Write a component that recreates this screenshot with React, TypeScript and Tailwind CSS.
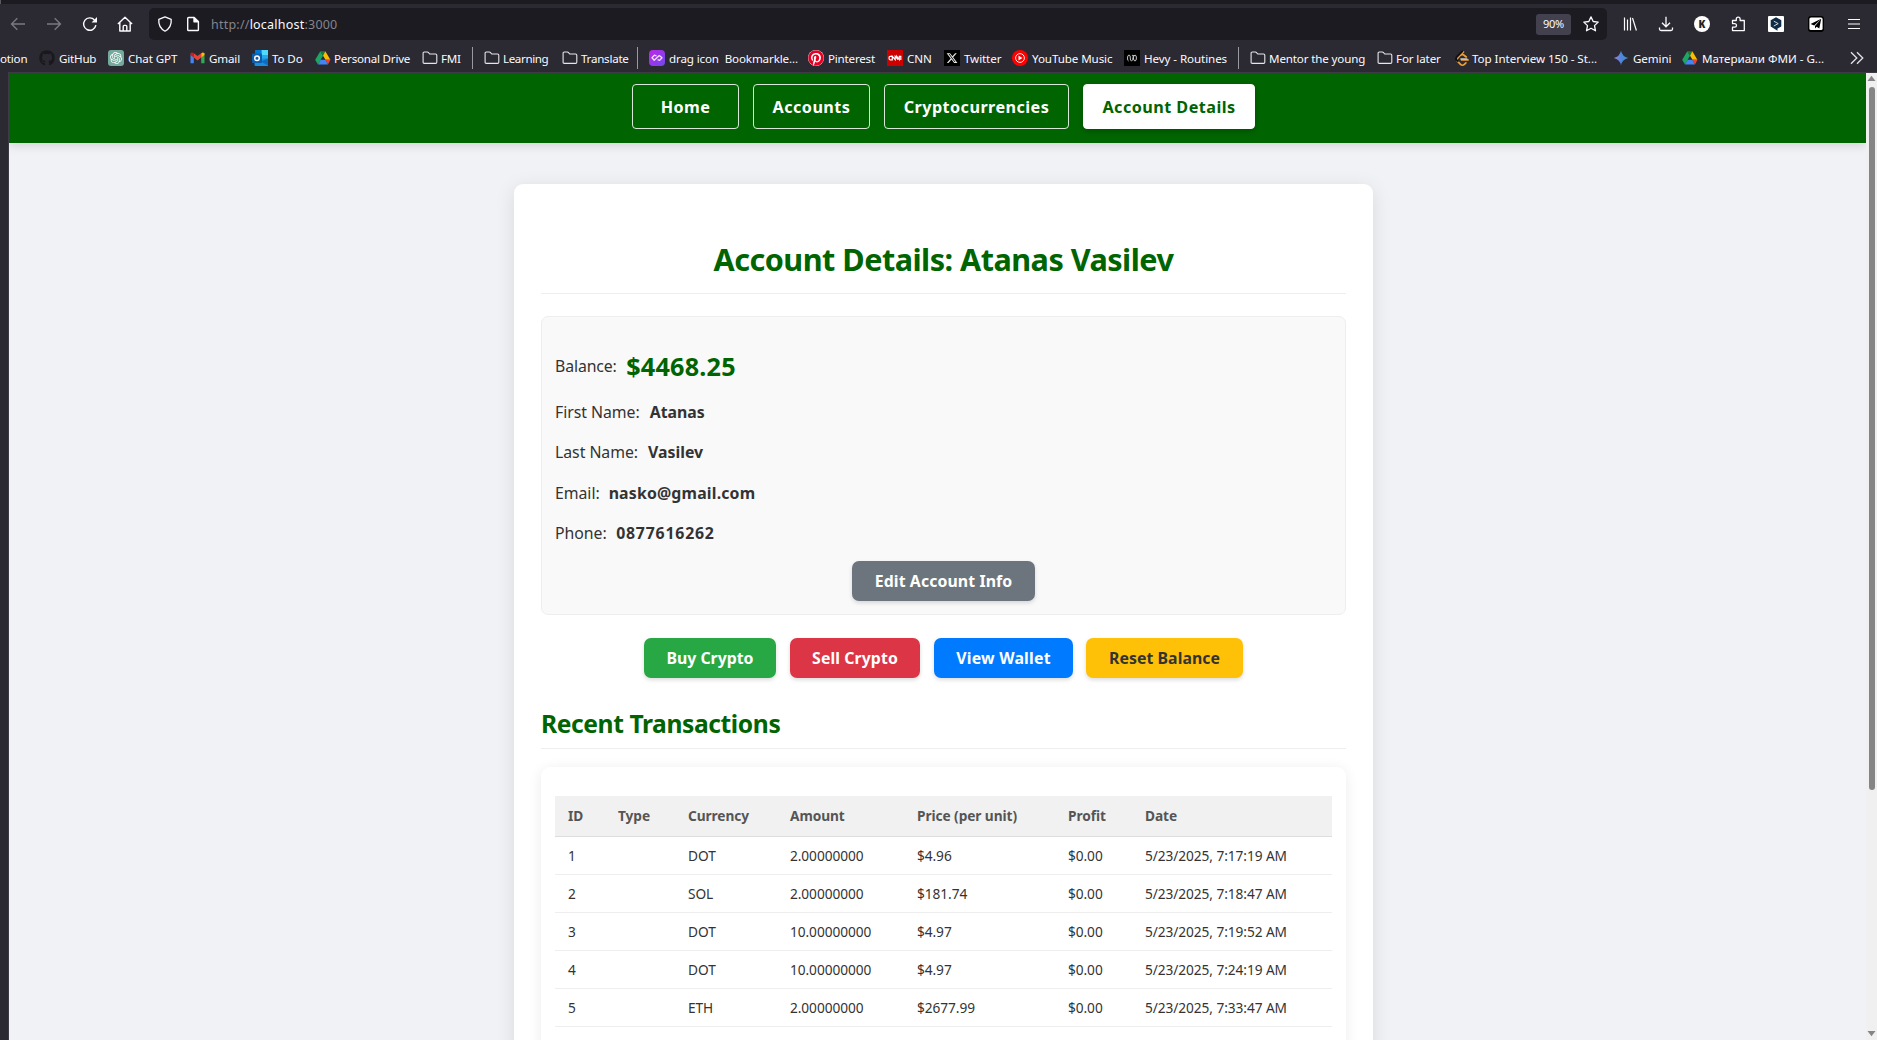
import React from 'react';
import { FaGithub, FaPinterest, FaXTwitter } from 'react-icons/fa6';
import { SiOpenai, SiLeetcode } from 'react-icons/si';

const FolderIcon = () => (
  <svg width="16" height="16" viewBox="0 0 16 16" fill="none" stroke="#e6e6ea" strokeWidth="1.1" strokeLinejoin="round">
    <path d="M1.1 12.2V3.2Q1.1 2 2.3 2H5.3Q6 2 6.5 2.6L7.7 4H13.6Q14.8 4 14.8 5.2V12.2Q14.8 13.4 13.6 13.4H2.3Q1.1 13.4 1.1 12.2Z" />
  </svg>
);

const DriveIcon = () => (
  <svg width="16" height="16" viewBox="0 0 16 16">
    <path d="M5.3 1.2 8 5.8 3 14.5 0.5 10.2Q.3 9.7.5 9.2Z" fill="#1fa463" />
    <path d="M5.3 1.2H10.3L8 5.8Z" fill="#188038" />
    <path d="M10.3 1.2 15.4 9.7H10.5L8 5.8Z" fill="#fbbc04" />
    <path d="M5.6 9.7H10.5L13 14.5H3Z" fill="#4285f4" />
    <path d="M10.5 9.7H15.5L13 14.5Z" fill="#ea4335" />
  </svg>
);

const GithubIcon = () => <FaGithub size={16} color="#19191d" />;

const ChatIcon = () => (
  <span className="flex h-4 w-4 items-center justify-center rounded-[3px] bg-[#74aa9c]">
    <SiOpenai size={12} color="#fff" />
  </span>
);

const GmailIcon = () => (
  <svg width="15" height="16" viewBox="0 0 15 16">
    <path d="M.5 4.5V13.2H3.8V7Z" fill="#4285f4" />
    <path d="M14.5 4.5V13.2H11.2V7Z" fill="#34a853" />
    <path d="M.5 3.6Q1.7 1.6 3.8 3.2V7.6L.5 5Z" fill="#c5221f" />
    <path d="M14.5 3.6Q13.3 1.6 11.2 3.2V7.6L14.5 5Z" fill="#fbbc04" />
    <path d="M3.8 3.2 7.5 6 11.2 3.2V7.6L7.5 10.4 3.8 7.6Z" fill="#ea4335" />
  </svg>
);

const OutlookIcon = () => (
  <svg width="16" height="16" viewBox="0 0 16 16">
    <path d="M3.5 0H16V9H3.5Z" fill="#28a8ea" />
    <path d="M9.5 0H16V5H9.5Z" fill="#50d9ff" />
    <path d="M3.5 0H9.5V5H3.5Z" fill="#0078d4" />
    <path d="M2.5 8.5H16V16H3.5Q2.5 16 2.5 15Z" fill="#1490df" />
    <path d="M16 8.5V15.5L9 11.5Z" fill="#0f6cbd" />
    <rect x="0" y="3.5" width="10" height="9.5" rx="1" fill="#0f5cad" />
    <circle cx="5" cy="8.2" r="2.3" fill="none" stroke="#fff" strokeWidth="1.5" />
  </svg>
);

const DragIcon = () => (
  <svg width="16" height="16" viewBox="0 0 16 16">
    <defs>
      <linearGradient id="drag" x1="0" y1="0" x2="1" y2="1">
        <stop offset="0" stopColor="#c026e8" />
        <stop offset="1" stopColor="#6d4aee" />
      </linearGradient>
    </defs>
    <rect width="16" height="16" rx="4" fill="url(#drag)" />
    <path d="M7.6 6 5.4 5.2 3 7.8 5.2 10.2 10.3 5.6 13 7.8 10.6 10.4 8.6 9.6" fill="none" stroke="#f5dcff" strokeWidth="1.3" strokeLinejoin="round" />
  </svg>
);

const PinterestIcon = () => (
  <span className="flex h-4 w-4 items-center justify-center rounded-full bg-white">
    <FaPinterest size={16} color="#e60023" />
  </span>
);

const CnnIcon = () => (
  <svg width="16" height="16" viewBox="0 0 16 16">
    <rect width="16" height="16" fill="#cc0000" />
    <path d="M5 6.3H3.2Q2 6.3 2 8T3.2 9.8H5.3V6.4L8.2 9.7V6.4L11 9.7M9.7 6.4V6.3L12.3 9.6V6.3H13.8V10" fill="none" stroke="#fff" strokeWidth="1.2" />
  </svg>
);

const XIcon = () => (
  <span className="flex h-4 w-4 items-center justify-center bg-black">
    <FaXTwitter size={12} color="#e8e8e8" />
  </span>
);

const YtMusicIcon = () => (
  <svg width="16" height="16" viewBox="0 0 16 16">
    <circle cx="8" cy="8" r="8" fill="#f00" />
    <circle cx="8" cy="8" r="4.4" fill="none" stroke="#fff" strokeWidth=".9" />
    <path d="M6.5 5.6V10.4L10.4 8Z" fill="#fff" />
  </svg>
);

const HevyIcon = () => (
  <svg width="16" height="16" viewBox="0 0 16 16">
    <rect width="16" height="16" fill="#000" />
    <path d="M4.6 11Q3.5 11 3.5 8T5 5 6.3 8 7.6 11 9.4 5M7.9 5.6Q9 4.4 9.4 6.4M9.4 8Q9.6 11 11 11T12.4 8 11 5 9 9.6" fill="none" stroke="#c4c4c4" strokeWidth="1" />
  </svg>
);

const LeetIcon = () => (
  <span className="relative flex h-4 w-4 items-center justify-center">
    <SiLeetcode size={15} color="#f0a030" />
    <svg className="absolute inset-0" width="16" height="16" viewBox="0 0 16 16" fill="none">
      <path d="M8.8.8 2.6 7Q1.4 8.4 2.6 9.8L4.4 11.6" stroke="#111114" strokeWidth="1.9" />
      <path d="M6.4 9H13.4" stroke="#c9c9cc" strokeWidth="1.5" />
    </svg>
  </span>
);

const GeminiIcon = () => (
  <svg width="16" height="16" viewBox="0 0 16 16">
    <defs>
      <linearGradient id="gem" x1="0" y1="0" x2="1" y2="0">
        <stop offset="0.1" stopColor="#9a7fd0" />
        <stop offset=".5" stopColor="#4f86e0" />
        <stop offset="1" stopColor="#3f8ec0" />
      </linearGradient>
    </defs>
    <path d="M8 .8Q9.3 6.7 15.2 8 9.3 9.3 8 15.2 6.7 9.3.8 8 6.7 6.7 8 .8Z" fill="url(#gem)" />
  </svg>
);

const bookmarks: { label: string; icon?: React.FC; cell: string; gap?: string; sep?: boolean }[] = [
  { label: 'otion', cell: 'w-[39px] tracking-[-0.2px]' },
  { label: 'GitHub', icon: GithubIcon, cell: 'w-[69px] tracking-[-0.2px]', gap: 'ml-1' },
  { label: 'Chat GPT', icon: ChatIcon, cell: 'w-[81px] tracking-[-0.1px]', gap: 'ml-1' },
  { label: 'Gmail', icon: GmailIcon, cell: 'w-[63px] tracking-[-0.15px]', gap: 'ml-1' },
  { label: 'To Do', icon: OutlookIcon, cell: 'w-[63px] tracking-[-0.1px]', gap: 'ml-1' },
  { label: 'Personal Drive', icon: DriveIcon, cell: 'w-[107px] tracking-[-0.22px]', gap: 'ml-[3px]' },
  { label: 'FMI', icon: FolderIcon, cell: 'w-[50px] tracking-[-0.3px]', gap: 'ml-[3px]' },
  { label: 'Learning', icon: FolderIcon, cell: 'w-[90px] tracking-[-0.38px]', gap: 'ml-[3px]', sep: true },
  { label: 'Translate', icon: FolderIcon, cell: 'w-[75px] tracking-[-0.25px]', gap: 'ml-[3px]' },
  { label: 'drag icon  Bookmarkle...', icon: DragIcon, cell: 'w-[171px] tracking-[-0.13px]', gap: 'ml-1', sep: true },
  { label: 'Pinterest', icon: PinterestIcon, cell: 'w-[79px] tracking-[-0.2px]', gap: 'ml-1' },
  { label: 'CNN', icon: CnnIcon, cell: 'w-[57px] tracking-[-0.1px]', gap: 'ml-1' },
  { label: 'Twitter', icon: XIcon, cell: 'w-[68px] tracking-[-0.1px]', gap: 'ml-1' },
  { label: 'YouTube Music', icon: YtMusicIcon, cell: 'w-[112px] tracking-[-0.09px]', gap: 'ml-1' },
  { label: 'Hevy - Routines', icon: HevyIcon, cell: 'w-[114px] tracking-[-0.08px]', gap: 'ml-1' },
  { label: 'Mentor the young', icon: FolderIcon, cell: 'w-[139px] tracking-[-0.14px]', gap: 'ml-[3px]', sep: true },
  { label: 'For later', icon: FolderIcon, cell: 'w-[77px] tracking-[-0.12px]', gap: 'ml-[3px]' },
  { label: 'Top Interview 150 - St...', icon: LeetIcon, cell: 'w-[159px] tracking-[-0.05px]', gap: 'ml-[2px]' },
  { label: 'Gemini', icon: GeminiIcon, cell: 'w-[69px] tracking-[-0.1px]', gap: 'ml-1' },
  { label: 'Материали ФМИ - G...', icon: DriveIcon, cell: 'w-[167px] tracking-[-0.02px]', gap: 'ml-1' },
];

function Toolbar() {
  return (
    <div className="flex h-10 shrink-0 items-center text-[#fbfbfe]">
      <div className="flex w-[149px] shrink-0 items-center pl-[10px]">
        <svg className="mr-5" width="16" height="16" viewBox="0 0 16 16" fill="none" stroke="#7b7a82" strokeWidth="1.3">
          <path d="M15 8H1.8M7.3 2.3 1.5 8 7.3 13.7" />
        </svg>
        <svg className="mr-5" width="16" height="16" viewBox="0 0 16 16" fill="none" stroke="#7b7a82" strokeWidth="1.3">
          <path d="M1 8H14.2M8.7 2.3 14.5 8 8.7 13.7" />
        </svg>
        <svg className="mr-[19px]" width="16" height="16" viewBox="0 0 16 16" fill="none" stroke="#fbfbfe" strokeWidth="1.4">
          <path d="M13.9 9.2A6.2 6.2 0 1 1 12.5 4" />
          <path d="M15 1V6.4H9.6Z" fill="#fbfbfe" stroke="none" />
        </svg>
        <svg width="16" height="16" viewBox="0 0 16 16" fill="none" stroke="#fbfbfe" strokeWidth="1.4" strokeLinejoin="round">
          <path d="M.9 8 8 1.2 15.1 8M2.8 6.5V15H13.2V6.5M6.2 15V10.4Q6.2 9.4 7.2 9.4H8.8Q9.8 9.4 9.8 10.4V15" />
        </svg>
      </div>
      <div className="flex h-8 w-[1458px] shrink-0 items-center rounded-[5px] bg-[#1c1b22] pl-2">
        <svg width="16" height="16" viewBox="0 0 16 16" fill="none" stroke="#fbfbfe" strokeWidth="1.3" strokeLinejoin="round">
          <path d="M8 .9 14.2 3.3Q14.9 11.5 8 15.2 1.1 11.5 1.8 3.3Z" />
        </svg>
        <svg className="ml-3" width="16" height="16" viewBox="0 0 16 16" fill="none" stroke="#fbfbfe" strokeWidth="1.4" strokeLinejoin="round">
          <path d="M2.7 13.7V2.5Q2.7 1.5 3.7 1.5H9L13.4 5.8V13.7Q13.4 14.5 12.6 14.5H3.5Q2.7 14.5 2.7 13.7Z" />
          <path d="M9 1.5V5.8H13.4Z" fill="#fbfbfe" />
        </svg>
        <div className="ml-[10px] flex-1 pt-[2px] text-[12.5px] tracking-[0.22px] text-[#85848c]">
          http://<span className="text-[#fbfbfe]">localhost</span>:3000
        </div>
        <div className="mr-3 flex h-[21px] w-[35px] items-center justify-center rounded-[3px] bg-[#42414d] pt-px text-[11px] tracking-[-0.3px]">90%</div>
        <svg className="mr-2" width="16" height="16" viewBox="0 0 16 16" fill="none" stroke="#fbfbfe" strokeWidth="1.3" strokeLinejoin="round">
          <path d="M8 .9 10.2 5.5 15.2 6.1 11.5 9.6 12.5 14.8 8 12.3 3.5 14.8 4.5 9.6.8 6.1 5.8 5.5Z" />
        </svg>
      </div>
      <div className="flex items-center pl-[15px]">
        <svg width="16" height="16" viewBox="0 0 16 16" stroke="#fbfbfe" strokeWidth="1.2">
          <path d="M2.5 1.5V14.5M5.5 3.5V14.5M8.5 1.5V14.5M10.5 2 14.4 14.5" />
        </svg>
        <svg className="ml-5" width="16" height="16" viewBox="0 0 16 16" fill="none" stroke="#fbfbfe" strokeWidth="1.3">
          <path d="M8 .8V10.6M4 6.8 8 10.8 12 6.8M1.5 11.5V13Q1.5 14.5 3 14.5H13Q14.5 14.5 14.5 13V11.5" />
        </svg>
        <div className="ml-[20px] flex h-4 w-4 items-center justify-center rounded-full bg-white text-[10px] leading-none font-black text-[#222]">K</div>
        <svg className="ml-[21px]" width="16" height="16" viewBox="0 0 16 16" fill="none" stroke="#fbfbfe" strokeWidth="1.3" strokeLinejoin="round">
          <path d="M1.5 14.6V11.2H3.7A1.6 1.6 0 0 0 3.7 7.6H1.5V4.5H5.3V3A1.7 1.7 0 0 1 9.1 3V4.5H13.3V14.6Z" />
        </svg>
        <svg className="ml-[21px]" width="16" height="16" viewBox="0 0 16 16">
          <rect width="16" height="16" rx="1" fill="#fff" />
          <path d="M8 1.2 13.3 4.2V10.4L9.5 12.6V14.8L2.7 10.4V4.2Z" fill="#0f2b46" />
          <path d="M5.8 5.2 10.2 7.6 5.8 10" fill="none" stroke="#cfd8e2" strokeWidth="1" />
        </svg>
        <svg className="ml-6" width="16" height="16" viewBox="0 0 16 16">
          <rect width="16" height="16" rx="3" fill="#000" />
          <rect x="1.4" y="1.4" width="13.2" height="12.6" rx="1.6" fill="#fff" />
          <path d="M13.2 2.8 2.6 8 6.2 9.4ZM13.2 2.8 11.3 12.4 8.6 10.8 7 12.6V10Z" fill="#000" />
        </svg>
        <svg className="ml-[22px]" width="16" height="16" viewBox="0 0 16 16" stroke="#fbfbfe" strokeWidth="1.2">
          <path d="M2 3.5H14M2 8H14M2 12.5H14" />
        </svg>
      </div>
    </div>
  );
}

function Bookmarks() {
  return (
    <div className="flex h-7 shrink-0 items-center text-[11.6px] text-[#fbfbfe]">
      {bookmarks.map(({ label, icon: Icon, cell, gap, sep }) => (
        <div key={label} className={`flex h-full shrink-0 items-center whitespace-pre ${cell}`}>
          {sep && <span className="mr-[11px] h-[22px] w-px shrink-0 bg-[#9a99a0]" />}
          {Icon && (
            <span className="flex w-4 shrink-0 justify-center">
              <Icon />
            </span>
          )}
          <span className={`mt-px ${gap ?? ''}`}>{label}</span>
        </div>
      ))}
      <svg width="16" height="16" viewBox="0 0 16 16" fill="none" stroke="#e4e4e8" strokeWidth="1.3">
        <path d="M2 2.2 7.8 8 2 13.8M8 2.2 13.8 8 8 13.8" />
      </svg>
    </div>
  );
}

const nav = [
  { label: 'Home', cls: 'w-[107px] border-white/85 text-white' },
  { label: 'Accounts', cls: 'w-[117px] border-white/85 text-white' },
  { label: 'Cryptocurrencies', cls: 'w-[185px] border-white/85 text-white' },
  { label: 'Account Details', cls: 'w-[172px] border-white bg-white text-[#006400] shadow-[0_2px_5px_rgba(0,0,0,0.2)]' },
];

const fields = [
  { label: 'First Name:', value: 'Atanas', gap: 'ml-[10px]' },
  { label: 'Last Name:', value: 'Vasilev', gap: 'ml-[10px]' },
  { label: 'Email:', value: 'nasko@gmail.com', gap: 'ml-[9px] tracking-[0.18px]' },
  { label: 'Phone:', value: '0877616262', gap: 'ml-[9.5px] tracking-[0.8px]' },
];

const actions = [
  { label: 'Buy Crypto', cls: 'w-[132px] mr-[14px] bg-[#28a745] text-white' },
  { label: 'Sell Crypto', cls: 'w-[130px] mr-[14px] bg-[#dc3545] text-white tracking-[0.1px]' },
  { label: 'View Wallet', cls: 'w-[139px] mr-[13px] bg-[#007bff] text-white tracking-[0.22px]' },
  { label: 'Reset Balance', cls: 'w-[157px] bg-[#ffc107] text-[#333] tracking-[0.06px]' },
];

const rows = [
  ['1', '', 'DOT', '2.00000000', '$4.96', '$0.00', '5/23/2025, 7:17:19 AM'],
  ['2', '', 'SOL', '2.00000000', '$181.74', '$0.00', '5/23/2025, 7:18:47 AM'],
  ['3', '', 'DOT', '10.00000000', '$4.97', '$0.00', '5/23/2025, 7:19:52 AM'],
  ['4', '', 'DOT', '10.00000000', '$4.97', '$0.00', '5/23/2025, 7:24:19 AM'],
  ['5', '', 'ETH', '2.00000000', '$2677.99', '$0.00', '5/23/2025, 7:33:47 AM'],
];
const head = ['ID', 'Type', 'Currency', 'Amount', 'Price (per unit)', 'Profit', 'Date'];
const columns = 'grid grid-cols-[50px_70px_102px_127px_151px_77px_1fr] items-center pl-[13px]';
const actionButton = 'flex h-10 items-center justify-center rounded-[7px] pt-[2px] font-bold shadow-[0_2px_4px_rgba(0,0,0,0.14)]';

export default function App() {
  return (
    <div className="flex h-[1040px] w-[1877px] flex-col overflow-hidden bg-[#2b2a33] font-['Noto_Sans',sans-serif]">
      <div className="h-1 shrink-0 border-l border-[#5b5b66] bg-[#1c1b22]" />
      <Toolbar />
      <Bookmarks />
      <div className="ml-2 h-px shrink-0 bg-[#3e3b46]" />
      <div className="flex min-h-0 flex-1">
        <div className="w-[9px] shrink-0 border-r border-[#3e3b46]" />
        <main className="flex min-w-0 flex-1 flex-col items-center overflow-hidden bg-[#f0f2f5] text-[15.84px] text-[#333]">
          <nav className="z-10 flex h-[70px] w-full shrink-0 justify-center gap-[14px] bg-[#006400] pt-[11px] pl-3 shadow-[0_2px_10px_rgba(0,0,0,0.15)]">
            {nav.map((n) => (
              <a key={n.label} className={`flex h-[45px] items-center justify-center rounded-[4px] border pt-[2px] text-[16.2px] font-bold tracking-[0.45px] ${n.cls}`}>
                {n.label}
              </a>
            ))}
          </nav>
          <section className="mt-[41px] ml-3 h-[1000px] w-[859px] shrink-0 rounded-[9px] bg-white px-[27px] pt-[55px] shadow-[0_4px_20px_rgba(0,0,0,0.1)]">
            <h1 className="border-b border-[#eee] pb-[14px] text-center text-[30.6px] leading-10 font-bold tracking-[-0.52px] text-[#006400]">
              Account Details: Atanas Vasilev
            </h1>
            <div className="mt-[22px] flex h-[299px] flex-col rounded-[7px] border border-[#eee] bg-[#f9f9f9] px-[13px] pt-[30px]">
              <div className="mb-[6px] flex h-10 shrink-0 items-center">
                <span className="tracking-[-0.12px]">Balance:</span>
                <span className="ml-[9.5px] text-[25.2px] font-bold tracking-[0.2px] text-[#006400]">$4468.25</span>
              </div>
              {fields.map((f) => (
                <div key={f.label} className="flex h-[40.2px] shrink-0 items-center">
                  <span className="tracking-[-0.04px]">{f.label}</span>
                  <span className={`font-bold ${f.gap}`}>{f.value}</span>
                </div>
              ))}
              <button className={`mt-[7.2px] w-[183px] shrink-0 self-center bg-[#6c757d] tracking-[0.1px] text-white ${actionButton}`}>Edit Account Info</button>
            </div>
            <div className="mt-[23px] flex justify-center">
              {actions.map((a) => (
                <button key={a.label} className={`${actionButton} ${a.cls}`}>
                  {a.label}
                </button>
              ))}
            </div>
            <h2 className="mt-[30px] border-b border-[#eee] pb-2 text-[24.6px] leading-8 font-bold tracking-[-0.4px] text-[#006400]">Recent Transactions</h2>
            <div className="mt-[18px] h-[420px] rounded-[9px] bg-white px-[14px] pt-[29px] text-[13.7px] shadow-[0_2px_14px_rgba(0,0,0,0.08)]">
              <div className={`h-[41px] border-b border-[#ddd] bg-[#f1f1f1] font-bold tracking-[-0.07px] text-[#555] ${columns}`}>
                {head.map((h) => (
                  <span key={h}>{h}</span>
                ))}
              </div>
              {rows.map((r) => (
                <div key={r[0]} className={`h-[38px] border-b border-[#eee] pt-[2px] tracking-[-0.07px] ${columns}`}>
                  {r.map((c, i) => (
                    <span key={i}>{c}</span>
                  ))}
                </div>
              ))}
            </div>
          </section>
        </main>
        <div className="flex w-[11px] shrink-0 flex-col items-center bg-[#f0f0f0]">
          <svg className="mt-[2px]" width="9" height="7" viewBox="0 0 9 7">
            <path d="M.5 6 4.5.8 8.5 6Z" fill="#858585" />
          </svg>
          <div className="mt-[5px] h-[703px] w-[6px] rounded-full bg-[#858585]" />
          <svg className="mt-auto mb-[3px]" width="9" height="7" viewBox="0 0 9 7">
            <path d="M.5 1 4.5 6.2 8.5 1Z" fill="#858585" />
          </svg>
        </div>
      </div>
    </div>
  );
}
